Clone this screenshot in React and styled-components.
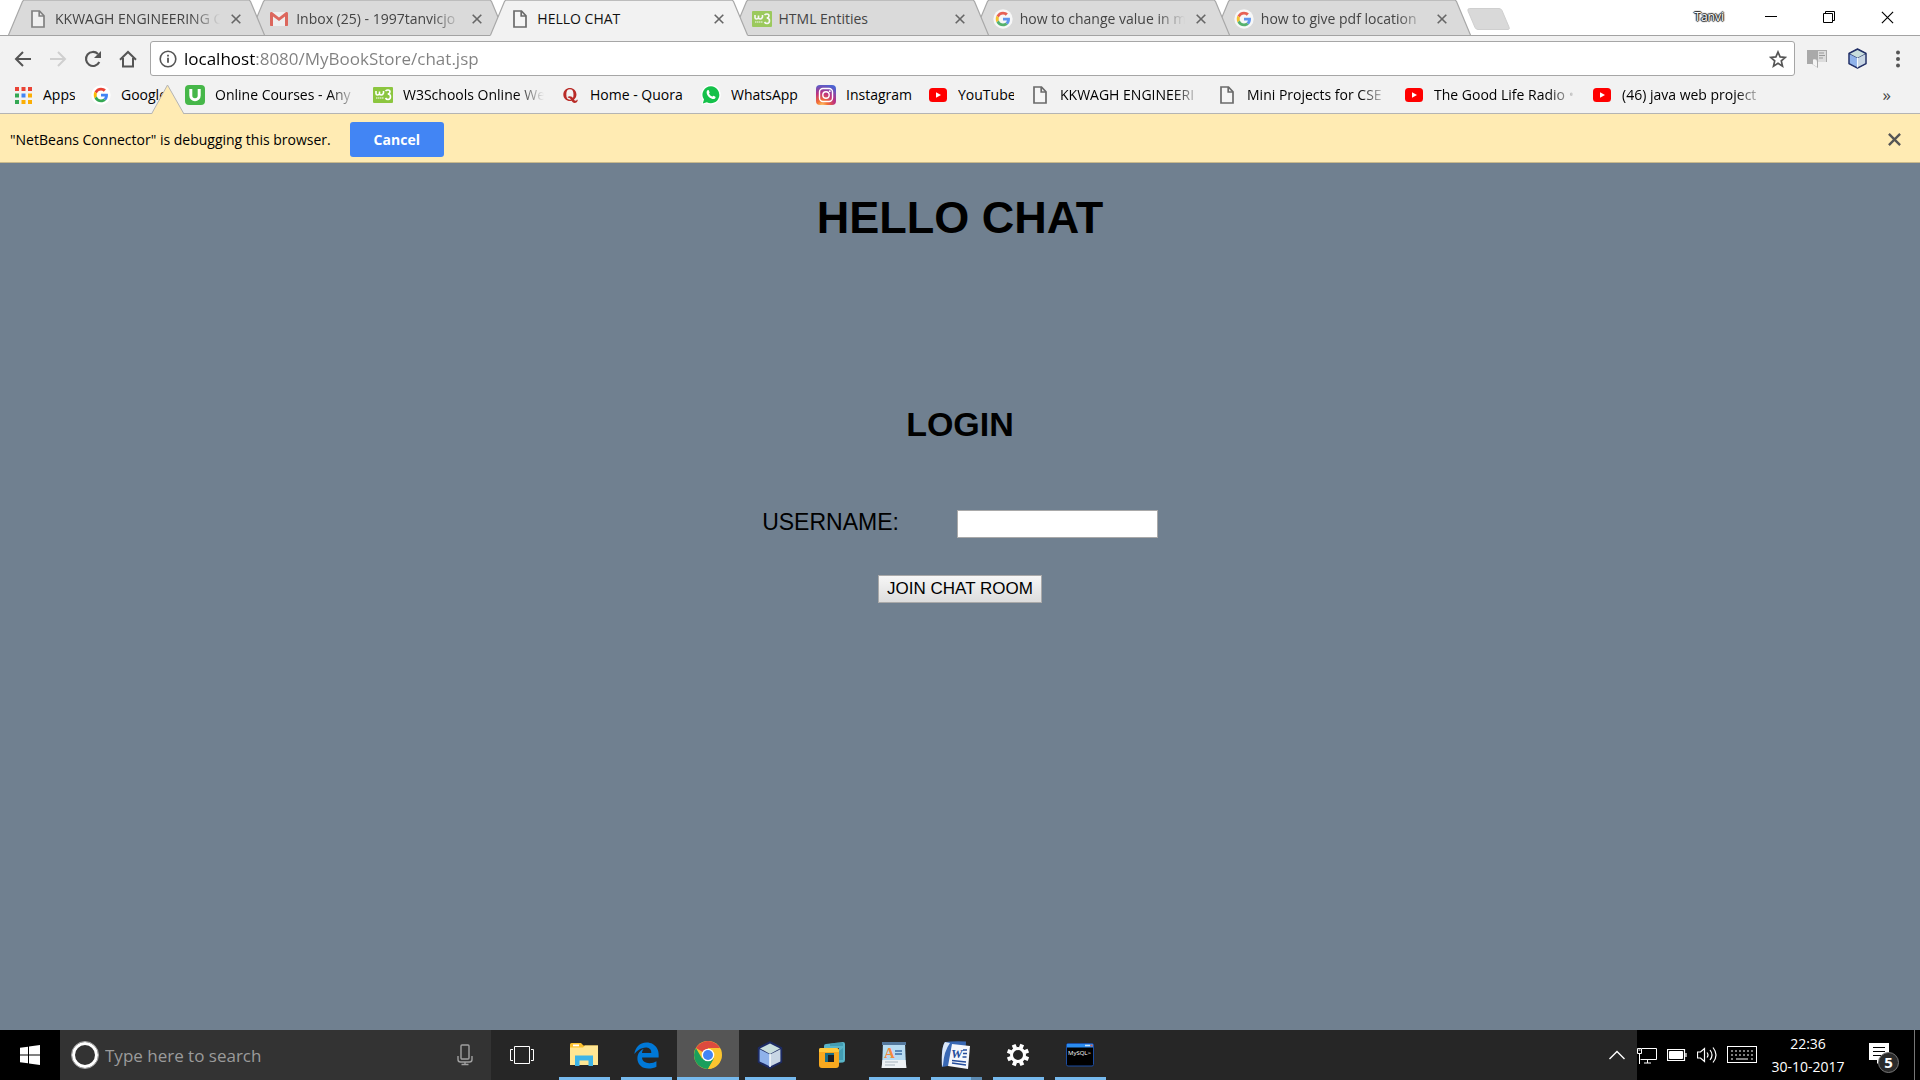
import React from "react";
import styled, { createGlobalStyle, css } from "styled-components";
import { FaQuora } from "react-icons/fa";
import { FaEdgeLegacy } from "react-icons/fa6";

const GlobalStyle = createGlobalStyle`
  *, *::before, *::after { box-sizing: border-box; }
  body { margin: 0; background: #708090; }
  button, input { font: inherit; }
  button { border: 0; padding: 0; background: none; color: inherit; cursor: pointer; }
  svg { display: block; flex: none; }
`;

const ui = `"Segoe UI", "Open Sans", "Noto Sans", sans-serif`;
const page = `"Liberation Sans", Arial, sans-serif`;

const Screen = styled.div`
  display: flex;
  flex-direction: column;
  min-height: 100vh;
  overflow: hidden;
  font-family: ${ui};
  font-size: 14px;
  color: #000;
`;

/* ---------- tab strip ---------- */
const TabStrip = styled.div`
  display: flex;
  align-items: stretch;
  height: 36px;
  padding-left: 8px;
  background: #fff;
  box-shadow: inset 0 -1px #a3a3a3;
`;
const Tabs = styled.div`
  display: flex;
  flex: 0 1 1463px;
  min-width: 0;
`;
const Tab = styled.div`
  display: flex;
  flex: 1 1 0;
  min-width: 0;
  margin-right: -16px;
  position: relative;
  z-index: ${(p) => p.$order};
  color: ${(p) => (p.$active ? "#111" : "#444")};
  &:last-child { margin-right: 0; }
`;
const TabBody = styled.div`
  display: flex;
  align-items: center;
  flex: 1;
  min-width: 0;
  padding: 1px 5px 0 4px;
  border-top: 1px solid #bdbdbd;
  border-bottom: 1px solid ${(p) => (p.$active ? "#f2f2f2" : "#a3a3a3")};
  background: ${(p) => (p.$active ? "#f2f2f2" : "#dadada")};
`;
const TabTitle = styled.button`
  display: flex;
  align-items: center;
  flex: 1;
  min-width: 0;
  gap: 7px;
  text-align: left;
`;
const Fade = styled.span`
  flex: 1;
  min-width: 0;
  overflow: hidden;
  white-space: nowrap;
  line-height: 20px;
  ${(p) => p.$fade && css`mask-image: linear-gradient(90deg, #000 calc(100% - 28px), transparent);`}
`;
const IconBox = styled.span`
  display: flex;
  align-items: center;
  justify-content: center;
  width: 20px;
  height: 20px;
  flex: none;
  opacity: ${(p) => (p.$dim ? 0.8 : 1)};
`;
const CloseButton = styled.button`
  display: flex;
  align-items: center;
  justify-content: center;
  width: 16px;
  height: 16px;
  margin-left: 8px;
  color: #666;
`;
const NewTab = styled.button`
  align-self: center;
  margin-left: -4px;
  margin-top: 2px;
`;
const WindowControls = styled.div`
  display: flex;
  align-items: center;
  margin-left: auto;
  height: 34px;
  padding-right: 4px;
`;
const UserName = styled.button`
  font-size: 12px;
  line-height: 16px;
  margin-right: 18px;
  color: #fff;
  text-shadow: 0 0 1px #222, 1px 0 1px #222, -1px 0 1px #222, 0 1px 1px #222, 0 -1px 1px #222;
`;
const WindowButton = styled.button`
  display: flex;
  align-items: center;
  justify-content: center;
  width: 58px;
  height: 34px;
`;

/* ---------- toolbar ---------- */
const Toolbar = styled.div`
  display: flex;
  align-items: center;
  height: 45px;
  padding: 0 12px 0 5px;
  background: #f2f2f2;
`;
const NavButton = styled.button`
  display: flex;
  align-items: center;
  justify-content: center;
  width: 35px;
  height: 34px;
`;
const UrlBar = styled.div`
  display: flex;
  align-items: center;
  flex: 1;
  height: 35px;
  margin-left: 5px;
  padding: 0 7px 0 8px;
  background: #fff;
  border: 1px solid #a6a6a6;
  border-radius: 3px;
`;
const UrlInput = styled.input`
  flex: 1;
  min-width: 0;
  height: 30px;
  margin-left: 7px;
  padding: 0;
  border: 0;
  outline: 0;
  font-size: 17px;
  line-height: 24px;
  color: transparent;
  caret-color: #000;
  background: linear-gradient(90deg, #000 71px, #808080 71px);
  background-clip: text;
  -webkit-background-clip: text;
`;
const Extensions = styled.div`
  display: flex;
  align-items: center;
  gap: 20px;
  margin-left: 12px;
`;

/* ---------- bookmarks ---------- */
const BookmarkBar = styled.nav`
  display: flex;
  align-items: center;
  gap: 16px;
  height: 33px;
  padding: 0 29px 4px 13px;
  background: #f2f2f2;
  border-bottom: 1px solid #b4b4b4;
`;
const Bookmark = styled.a`
  display: flex;
  align-items: center;
  gap: 10px;
  flex: none;
  width: ${(p) => p.$width}px;
  color: #000;
  text-decoration: none;
`;
const More = styled.button`
  margin-left: auto;
  font-size: 17px;
  line-height: 20px;
  color: #444;
`;

/* ---------- infobar ---------- */
const InfoBar = styled.div`
  position: relative;
  display: flex;
  align-items: center;
  height: 49px;
  padding: 2px 19px 0 10px;
  background: #ffebb3;
  border-bottom: 1px solid #c9b98c;
`;
const Pointer = styled.svg`
  position: absolute;
  left: 151px;
  bottom: 100%;
  margin-bottom: -1px;
`;
const CancelButton = styled.button`
  width: 94px;
  height: 35px;
  margin-left: 19px;
  border-radius: 3px;
  background: #4285f4;
  color: #fff;
  font-weight: 700;
`;
const InfoClose = styled.button`
  margin-left: auto;
  color: #555;
`;

/* ---------- page ---------- */
const Main = styled.main`
  flex: 1;
  display: flex;
  flex-direction: column;
  align-items: center;
  padding-top: 29px;
  background: #708090;
  font-family: ${page};
`;
const Title = styled.h1`
  margin: 0;
  font-size: 45px;
  line-height: 52px;
`;
const Subtitle = styled.h2`
  margin: 160px 0 0;
  font-size: 34px;
  line-height: 40px;
`;
const LoginForm = styled.form`
  display: flex;
  flex-direction: column;
  align-items: center;
  gap: 37px;
  margin-top: 66px;
`;
const Field = styled.div`
  display: flex;
  align-items: center;
  gap: 58px;
`;
const FieldLabel = styled.label`
  font-size: 23px;
  line-height: 24px;
  padding-bottom: 4px;
`;
const FieldInput = styled.input`
  width: 201px;
  height: 28px;
  border: 1px solid #a9a9a9;
  background: #fff;
  font-size: 17px;
`;
const JoinButton = styled.button`
  width: 164px;
  height: 28px;
  border: 1px solid #a9a9a9;
  background: linear-gradient(#f6f6f6, #dddddd);
  font-size: 17px;
  line-height: 20px;
  white-space: nowrap;
`;

/* ---------- taskbar ---------- */
const Taskbar = styled.footer`
  display: flex;
  height: 50px;
  background: #262626;
  color: #fff;
`;
const StartButton = styled.button`
  display: flex;
  align-items: center;
  justify-content: center;
  width: 60px;
  background: #000;
`;
const SearchBox = styled.label`
  display: flex;
  align-items: center;
  width: 431px;
  padding: 0 18px 0 11px;
  background: #333;
`;
const SearchInput = styled.input`
  flex: 1;
  min-width: 0;
  height: 30px;
  margin-left: 6px;
  padding: 0;
  border: 0;
  outline: 0;
  background: none;
  color: #fff;
  font-size: 17px;
  &::placeholder { color: #9b9b9b; opacity: 1; }
`;
const TaskButton = styled.button`
  display: flex;
  align-items: center;
  justify-content: center;
  width: 62px;
  border-top: 3px solid transparent;
  border-bottom: 3px solid transparent;
  background:
    ${(p) => p.$split ? "linear-gradient(#5b89b0, #5b89b0) 46px 100% / 11px 3px no-repeat border-box," : ""}
    ${(p) => p.$open ? `linear-gradient(#76b9ed, #76b9ed) 50% 100% / ${p.$active ? 62 : 51}px 3px no-repeat border-box,` : ""}
    ${(p) => (p.$active ? "#555" : "#262626")} border-box;
`;
const Tray = styled.div`
  display: flex;
  align-items: center;
  margin-left: auto;
  background: #000;
`;
const TrayToggle = styled.button`
  display: flex;
  align-items: center;
  justify-content: center;
  align-self: stretch;
  width: 40px;
  background: #262626;
`;
const TrayIcons = styled.div`
  display: flex;
  align-items: center;
  gap: 10px;
`;
const Clock = styled.time`
  display: flex;
  flex-direction: column;
  align-items: center;
  width: 102px;
  font-size: 14px;
  line-height: 23px;
`;
const Notifications = styled.button`
  width: 32px;
  height: 32px;
  margin: 6px 13px 0 10px;
`;
const ShowDesktop = styled.button`
  align-self: stretch;
  width: 6px;
  border-left: 1px solid #777;
`;

/* ---------- drawings ---------- */
const DocIcon = () => (
  <svg width="14" height="18" viewBox="0 0 14 18" fill="none" stroke="#6b6b6b" strokeWidth="1.7">
    <path d="M1 1h7.5L13 5.8V17H1z" fill="#f5f5f5" />
    <path d="M8.2 1v5H13" />
  </svg>
);
const GoogleIcon = () => (
  <svg width="20" height="20" viewBox="-9 -9 66 66">
    <circle cx="24" cy="24" r="32" fill="#fff" />
    <path fill="#EA4335" d="M24 9.5c3.54 0 6.71 1.22 9.21 3.6l6.85-6.85C35.9 2.38 30.47 0 24 0 14.62 0 6.51 5.38 2.56 13.22l7.98 6.19C12.43 13.72 17.74 9.5 24 9.5z" />
    <path fill="#4285F4" d="M46.98 24.55c0-1.57-.15-3.09-.38-4.55H24v9.02h12.94c-.58 2.96-2.26 5.48-4.78 7.18l7.73 6c4.51-4.18 7.09-10.36 7.09-17.65z" />
    <path fill="#FBBC05" d="M10.53 28.59A14.5 14.5 0 0 1 9.77 24c0-1.6.28-3.14.76-4.59l-7.98-6.19A23.9 23.9 0 0 0 0 24c0 3.88.92 7.54 2.56 10.78z" />
    <path fill="#34A853" d="M24 48c6.48 0 11.93-2.13 15.89-5.81l-7.73-6c-2.15 1.45-4.92 2.3-8.16 2.3-6.26 0-11.57-4.22-13.47-9.91l-7.98 6.19C6.51 42.62 14.62 48 24 48z" />
  </svg>
);
const GmailIcon = () => (
  <svg width="18" height="14" viewBox="0 0 18 14">
    <path d="M2 0h14v14H2z" fill="#f4f4f4" />
    <path d="M0 1.4V13c0 .6.4 1 1 1h2V4.6L9 9l6-4.400V14h2c.6 0 1-.4 1-1V1.400C18 .2 16.700-.4 15.700.3L9 5.400 2.300.3C1.300-.4 0 .2 0 1.400z" fill="#dd4b3e" />
  </svg>
);
const W3Icon = () => (
  <svg width="20" height="16" viewBox="0 0 20 16">
    <rect width="20" height="16" rx="1" fill="#8cc63f" />
    <path d="M3 4v2.500q0 1.500 1.500 1.500T6.500 6.500V4.500v2q0 1.500 1.700 1.500T10.500 6V4M12.500 4q1-1 2.500-1 2 0 2 2 0 1.500-2.200 2 2.700.2 2.700 2.700T15 12.500q-1.700 0-2.500-1.500" fill="none" stroke="#fff" strokeWidth="1.600" />
    <path d="M3 11h8" stroke="#fff" strokeWidth="1" strokeDasharray="1.500 .5" />
  </svg>
);
const AppsIcon = () => {
  const colors = ["#ea4335", "#ea4335", "#ea4335", "#34a853", "#4285f4", "#fbae05", "#34a853", "#fbae05", "#fbae05"];
  return (
    <svg width="17" height="17" viewBox="0 0 17 17">
      {colors.map((c, i) => <rect key={i} x={(i % 3) * 6.500} y={Math.floor(i / 3) * 6.500} width="4" height="4" fill={c} />)}
    </svg>
  );
};
const UdemyIcon = () => (
  <svg width="20" height="20" viewBox="0 0 20 20">
    <rect width="20" height="20" rx="4" fill="#46b749" />
    <path d="M5.800 4v6.500a4.200 4.200 0 0 0 8.400 0V4" fill="none" stroke="#fff" strokeWidth="3" />
  </svg>
);
const WhatsAppIcon = () => (
  <svg width="20" height="20" viewBox="0 0 20 20">
    <path d="M10 0a9.800 9.800 0 1 1-4.500 18.500L.5 20l1.200-5A9.800 9.800 0 0 1 10 0z" fill="#fff" />
    <path d="M10 1.300a8.500 8.500 0 1 1-4.200 16L1.800 18.500 3 14.600A8.500 8.500 0 0 1 10 1.300z" fill="#15c14a" />
    <path d="M6.300 5.500c.6-.6 1.200-.6 1.500 0l.8 1.700c.2.500-.7 1.100-.5 1.600.7 1.300 1.700 2.200 3 2.700.5.200 1-1 1.500-.8l1.800 1c.5.300-.1 1.700-.8 2.100-2 1.200-7.800-1.800-8-6.500 0-.700.3-1.400.7-1.800z" fill="#fff" />
  </svg>
);
const InstagramIcon = () => (
  <svg width="20" height="20" viewBox="0 0 20 20">
    <defs>
      <radialGradient id="insta" cx="0.3" cy="1.05" r="1.1">
        <stop offset="0" stopColor="#fed576" />
        <stop offset="0.25" stopColor="#f47133" />
        <stop offset="0.6" stopColor="#bc3081" />
        <stop offset="1" stopColor="#4c63d2" />
      </radialGradient>
    </defs>
    <rect width="20" height="20" rx="4" fill="url(#insta)" />
    <g fill="none" stroke="#fff" strokeWidth="1.400">
      <rect x="3.500" y="3.500" width="13" height="13" rx="3.500" />
      <circle cx="10" cy="10" r="3.200" />
    </g>
    <circle cx="13.800" cy="6.200" r="0.900" fill="#fff" />
  </svg>
);
const YoutubeIcon = () => (
  <svg width="18" height="14" viewBox="0 0 18 14">
    <rect width="18" height="14" rx="3.500" fill="#f00" />
    <path d="M7 4.200v5.600L12 7z" fill="#fff" />
  </svg>
);
const Cross = ({ size = 10, width = 2 }) => (
  <svg width={size} height={size} viewBox="0 0 10 10" stroke="currentColor" strokeWidth={width}>
    <path d="M.7.7l8.600 8.600M9.300.7L.7 9.300" />
  </svg>
);
const Arrow = ({ color, flip }) => (
  <svg width="18" height="18" viewBox="0 0 18 18" fill="none" stroke={color} strokeWidth="2">
    <path d={flip ? "M1 9h15M9 2l7 7-7 7" : "M17 9H2M9 2L2 9l7 7"} />
  </svg>
);
const CubeIcon = ({ size }) => (
  <svg width={size} height={size} viewBox="0 0 28 28">
    <path d="M14 1l11.500 6v14L14 27 2.500 21V7z" fill="#1d2b63" stroke="#1d2b63" strokeWidth="1.500" strokeLinejoin="round" />
    <path d="M14 2.500L24 7.500 14 13 4 7.500z" fill="#c9dedd" />
    <path d="M3.600 8.200L14 13.500v12L3.600 20.400z" fill="#8fb2ea" />
    <path d="M24.400 8.200L14 13.500v12l10.400-5.100z" fill="#c8d6e4" />
    <path d="M14 13v13" stroke="#f4f8fc" strokeWidth="1.500" />
  </svg>
);
const Edge = ({ active, right }) => {
  const fill = active ? "#f2f2f2" : "#dadada";
  return (
    <svg width="16" height="36" viewBox="0 0 16 36">
      <g transform={right ? "translate(16 0) scale(-1 1)" : undefined}>
        <path d="M0 36L15 .5H16V36z" fill={fill} />
        <path d="M.3 35.500L14.500 1.500Q15 .5 16 .5" fill="none" stroke="#a8a8a8" strokeWidth="1.200" />
        {!active && <path d="M0 35.500h16" stroke="#a3a3a3" />}
      </g>
    </svg>
  );
};

const ExplorerIcon = () => (
  <svg width="28" height="24" viewBox="0 0 28 24">
    <path d="M0 1.500Q0 0 1.500 0H11l2.500 2.500H28V22H0z" fill="#fbc02d" />
    <path d="M0 4.500h13L15 2.500h13V22H0z" fill="#ffe693" />
    <path d="M3 1.500h6v1.800H3z" fill="#fff" />
    <path d="M5 12.500h18V23h-4.500v-5.500h-9V23H5z" fill="#3db4e7" />
  </svg>
);
const ChromeIcon = () => (
  <svg width="28" height="28" viewBox="0 0 28 28">
    <circle cx="14" cy="14" r="14" fill="#fbc52f" />
    <path d="M14 14L1.900 7A14 14 0 0 1 26.100 7H14z" fill="#dd4b3e" />
    <path d="M1.900 7A14 14 0 0 0 14 28l6-10.500H8z" fill="#1a9f5c" />
    <path d="M26.100 8H14v5l6.100 4.500L14 28A14 14 0 0 0 26.100 8z" fill="#fbc52f" />
    <circle cx="14" cy="14" r="6.300" fill="#fff" />
    <circle cx="14" cy="14" r="5" fill="#4285f4" />
  </svg>
);
const VmwareIcon = () => (
  <svg width="28" height="28" viewBox="0 0 28 28">
    <path d="M8 3l17-2q2 0 2 2v16q0 2-2 2.500L9 22.500Q6 22.500 6 20V5q0-2 2-2zM12 8v9h9V7z" fill="#5ab5c8" fillRule="evenodd" />
    <path d="M12 3q6-2 13-1v3H12zM21 10v9h4V7z" fill="#348ea5" opacity=".6" />
    <path d="M7 12h9v9H7z" fill="#1c6f86" />
    <path d="M10 14h6v7h-6z" fill="#1f1f1f" />
    <path d="M3 7h15q3 0 3 3v14q0 3-3 3H4q-3 0-3-3V9q0-2 2-2zM7 12v9h9v-9z" fill="#f8a91f" fillRule="evenodd" />
    <path d="M3 7h15q3 0 3 3v1H1V9q0-2 2-2z" fill="#ffc93c" />
  </svg>
);
const WordpadIcon = () => (
  <svg width="26" height="28" viewBox="0 0 26 28">
    <path d="M2 2h22l1 25H1z" fill="#b8dcf2" />
    <path d="M1 1h24v3H1z" fill="#54789d" />
    <path d="M1.500 19h23l1 8H.5z" fill="#edf1f4" />
    <text x="3" y="17" fontFamily="Liberation Serif, serif" fontWeight="700" fontSize="15" fill="#f58a3c">A</text>
    <path d="M14 10h7M14 13h7" stroke="#3d6ea5" strokeWidth="1.500" />
    <path d="M4 21h13M4 24h10" stroke="#a7b3bd" strokeWidth="1" />
  </svg>
);
const WordIcon = () => (
  <svg width="30" height="28" viewBox="0 0 30 28">
    <path d="M4 1Q12 0 25 .5L24 22 1 26Q0 6 4 1z" fill="#3968b4" />
    <path d="M9 2Q3 10 2 24L1 26Q0 6 4 1z" fill="#dae7f8" />
    <path d="M11 3L29 5 27 28 7 25z" fill="#f5f7fb" />
    <text x="10" y="17" fontFamily="Liberation Serif, serif" fontStyle="italic" fontWeight="700" fontSize="13" fill="#254d9b">W</text>
    <path d="M22 9h4M22 12.500h4M21.500 16h4M11 19.500l14 1.500M11 22l14 2" stroke="#254d9b" strokeWidth="1.600" />
  </svg>
);
const GearIcon = () => (
  <svg width="24" height="24" viewBox="0 0 24 24" fill="none" stroke="#fff">
    <circle cx="12" cy="12" r="6.500" strokeWidth="3" />
    {[0, 45, 90, 135, 180, 225, 270, 315].map((a) => (
      <path key={a} d="M12 .8v4" strokeWidth="4" transform={`rotate(${a + 22} 12 12)`} />
    ))}
  </svg>
);
const MysqlIcon = () => (
  <svg width="28" height="24" viewBox="0 0 28 24">
    <rect x=".5" y=".5" width="27" height="22.500" rx="1.500" fill="#000" stroke="#1b4da3" />
    <path d="M1 1h26v3.500H1z" fill="#2a8cf0" />
    <path d="M19 2.500h5" stroke="#cfe2f8" strokeWidth="1.500" />
    <path d="M24.500 2.500h2" stroke="#e05a3a" strokeWidth="1.800" />
    <text x="2" y="12" fontFamily="Open Sans, sans-serif" fontSize="6" fill="#fff">MySQL&gt;</text>
  </svg>
);

const tabs = [
  { title: "KKWAGH ENGINEERING C", icon: <DocIcon />, fade: true },
  { title: "Inbox (25) - 1997tanvicjo", icon: <GmailIcon />, fade: true },
  { title: "HELLO CHAT", icon: <DocIcon />, active: true },
  { title: "HTML Entities", icon: <W3Icon /> },
  { title: "how to change value in m", icon: <GoogleIcon />, fade: true },
  { title: "how to give pdf location", icon: <GoogleIcon />, fade: true },
];

const bookmarks = [
  { title: "Apps", icon: <AppsIcon />, width: 62 },
  { title: "Google", icon: <GoogleIcon />, width: 78 },
  { title: "Online Courses - Any", icon: <UdemyIcon />, width: 172, fade: true },
  { title: "W3Schools Online We", icon: <W3Icon />, width: 171, fade: true },
  { title: "Home - Quora", icon: <FaQuora size={17} color="#b92b27" />, width: 125 },
  { title: "WhatsApp", icon: <WhatsAppIcon />, width: 99 },
  { title: "Instagram", icon: <InstagramIcon />, width: 96 },
  { title: "YouTube", icon: <YoutubeIcon />, width: 86 },
  { title: "KKWAGH ENGINEERI", icon: <DocIcon />, width: 171, fade: true },
  { title: "Mini Projects for CSE", icon: <DocIcon />, width: 171, fade: true },
  { title: "The Good Life Radio •", icon: <YoutubeIcon />, width: 172, fade: true },
  { title: "(46) java web project", icon: <YoutubeIcon />, width: 172, fade: true },
];

const tasks = [
  {
    name: "Task view",
    icon: (
      <svg width="24" height="18" viewBox="0 0 24 18" fill="none" stroke="#fff">
        <path d="M4.500.5h15v17h-15zM3 3.500H.5v11H3M21 3.500h2.500v11H21" />
      </svg>
    ),
  },
  { name: "File Explorer", icon: <ExplorerIcon />, open: true },
  { name: "Edge", icon: <FaEdgeLegacy size={27} color="#0078d7" />, open: true },
  { name: "Chrome", icon: <ChromeIcon />, open: true, active: true },
  { name: "NetBeans", icon: <CubeIcon size={28} />, open: true },
  { name: "VMware", icon: <VmwareIcon /> },
  { name: "WordPad", icon: <WordpadIcon />, open: true },
  { name: "Word", icon: <WordIcon />, open: true, split: true },
  { name: "Settings", icon: <GearIcon />, open: true },
  { name: "MySQL", icon: <MysqlIcon />, open: true },
];

export default function App() {
  return (
    <Screen>
      <GlobalStyle />
      <TabStrip>
        <Tabs>
          {tabs.map((t, i) => (
            <Tab key={t.title} $active={t.active} $order={t.active ? 10 : 9 - i}>
              <Edge active={t.active} />
              <TabBody $active={t.active}>
                <TabTitle type="button">
                  <IconBox $dim={!t.active}>{t.icon}</IconBox>
                  <Fade $fade={t.fade}>{t.title}</Fade>
                </TabTitle>
                <CloseButton type="button" aria-label="Close tab"><Cross width={1.600} /></CloseButton>
              </TabBody>
              <Edge active={t.active} right />
            </Tab>
          ))}
        </Tabs>
        <NewTab type="button" aria-label="New tab">
          <svg width="43" height="22" viewBox="0 0 43 22">
            <path d="M2.500.5H32q2 0 3 2l7 16.500q1 2.500-1 2.500H11q-2 0-3-2L1 3Q.3.5 2.500.5z" fill="#d9d9d9" stroke="#cfcfcf" />
          </svg>
        </NewTab>
        <WindowControls>
          <UserName type="button">Tanvi</UserName>
          <WindowButton type="button" aria-label="Minimize">
            <svg width="12" height="12" stroke="#000"><path d="M0 5.500h12" /></svg>
          </WindowButton>
          <WindowButton type="button" aria-label="Restore">
            <svg width="12" height="12" fill="none" stroke="#000"><path d="M.5 2.500h9v9h-9zM2.500 2.500v-2h9v9h-2" /></svg>
          </WindowButton>
          <WindowButton type="button" aria-label="Close">
            <Cross size={13} width={0.900} />
          </WindowButton>
        </WindowControls>
      </TabStrip>

      <Toolbar>
        <NavButton type="button" aria-label="Back"><Arrow color="#555" /></NavButton>
        <NavButton type="button" aria-label="Forward"><Arrow color="#cfcfcf" flip /></NavButton>
        <NavButton type="button" aria-label="Reload">
          <svg width="18" height="18" viewBox="0 0 18 18">
            <path d="M15.300 12A7 7 0 1 1 14 4" fill="none" stroke="#555" strokeWidth="2.100" />
            <path d="M17 1v7h-7z" fill="#555" />
          </svg>
        </NavButton>
        <NavButton type="button" aria-label="Home">
          <svg width="18" height="18" viewBox="0 0 18 18" fill="none" stroke="#555" strokeWidth="2">
            <path d="M1 9.800L9 2l8 7.800M4 8v8.500h10V8" />
          </svg>
        </NavButton>
        <UrlBar>
          <svg width="18" height="18" viewBox="0 0 18 18" fill="none" stroke="#555">
            <circle cx="9" cy="9" r="7.800" strokeWidth="1.600" />
            <path d="M9 7.800v5M9 4.700v1.900" strokeWidth="1.800" />
          </svg>
          <UrlInput aria-label="Address" defaultValue="localhost:8080/MyBookStore/chat.jsp" spellCheck={false} />
          <svg width="18" height="18" viewBox="0 0 18 18" fill="none" stroke="#555" strokeWidth="1.700">
            <path d="M9 2l2.100 4.900 5.200.5-4 3.500 1.200 5.200L9 13.300l-4.500 2.800 1.200-5.200-4-3.500 5.200-.5z" />
          </svg>
        </UrlBar>
        <Extensions>
          <button type="button" aria-label="Reader extension">
            <svg width="20" height="20" viewBox="0 0 20 20">
              <path d="M0 1h20v12h-9v6l-6-4H0z" fill="#a9a9a9" />
              <path d="M11 2h8v11h-8z" fill="#dcdcdc" />
              <path d="M12 4h5M12 6.500h6M12 9h4" stroke="#999" />
              <path d="M6 10.500q4-1 4 2v5.500l-4-2.500z" fill="#f4f4f4" />
            </svg>
          </button>
          <button type="button" aria-label="NetBeans extension"><CubeIcon size={21} /></button>
          <button type="button" aria-label="Menu">
            <svg width="20" height="18" viewBox="0 0 20 18" fill="#555">
              <circle cx="10" cy="2.500" r="2" /><circle cx="10" cy="9" r="2" /><circle cx="10" cy="15.500" r="2" />
            </svg>
          </button>
        </Extensions>
      </Toolbar>

      <BookmarkBar>
        {bookmarks.map((b) => (
          <Bookmark key={b.title} href="#" $width={b.width}>
            <IconBox>{b.icon}</IconBox>
            <Fade $fade={b.fade}>{b.title}</Fade>
          </Bookmark>
        ))}
        <More type="button">»</More>
      </BookmarkBar>

      <InfoBar>
        <Pointer width="34" height="31" viewBox="0 0 34 31">
          <path d="M.5 30L16.500 1 33 30V31H.5z" fill="#ffebb3" />
          <path d="M.5 30L16.500 1 33 30" fill="none" stroke="#b4b4b4" />
        </Pointer>
        <span>"NetBeans Connector" is debugging this browser.</span>
        <CancelButton type="button">Cancel</CancelButton>
        <InfoClose type="button" aria-label="Dismiss"><Cross size={13} width={1.800} /></InfoClose>
      </InfoBar>

      <Main>
        <Title>HELLO CHAT</Title>
        <Subtitle>LOGIN</Subtitle>
        <LoginForm onSubmit={(e) => e.preventDefault()}>
          <Field>
            <FieldLabel htmlFor="username">USERNAME:</FieldLabel>
            <FieldInput id="username" name="username" type="text" />
          </Field>
          <JoinButton type="submit">JOIN CHAT ROOM</JoinButton>
        </LoginForm>
      </Main>

      <Taskbar>
        <StartButton type="button" aria-label="Start">
          <svg width="20" height="20" viewBox="0 0 20 20" fill="#fff">
            <path d="M0 2.800L8 1.700V9.500H0zM9 1.500L20 0v9.500H9zM0 10.500h8v7.800L0 17.200zM9 10.500h11V20L9 18.500z" />
          </svg>
        </StartButton>
        <SearchBox>
          <svg width="28" height="28" viewBox="0 0 28 28">
            <circle cx="14" cy="14" r="11.500" fill="none" stroke="#fff" strokeWidth="3" />
            <circle cx="14" cy="14" r="13.500" fill="none" stroke="#aaa" />
          </svg>
          <SearchInput placeholder="Type here to search" aria-label="Search" />
          <svg width="16" height="22" viewBox="0 0 16 22" fill="none" stroke="#a0a0a0" strokeWidth="1.400">
            <rect x="4" y="1" width="8" height="14" rx="1" />
            <path d="M1 12v3.500q0 2.500 2.500 2.500h9q2.500 0 2.500-2.500V12M8 18v2.500M4.500 20.500h7" />
          </svg>
        </SearchBox>
        {tasks.map((t) => (
          <TaskButton key={t.name} type="button" aria-label={t.name} $open={t.open} $active={t.active} $split={t.split}>
            {t.icon}
          </TaskButton>
        ))}
        <Tray>
          <TrayToggle type="button" aria-label="Show hidden icons">
            <svg width="16" height="10" viewBox="0 0 16 10" fill="none" stroke="#fff" strokeWidth="1.400"><path d="M.5 9L8 1.500 15.500 9" /></svg>
          </TrayToggle>
          <TrayIcons>
            <svg width="20" height="17" viewBox="0 0 20 17" fill="none" stroke="#fff">
              <path d="M5 1.500h14.500v11H3.500M10.500 13v3M7 16h7M.5 1.500h4v5h-4zM2.500 7v10M1.500 3h2" />
            </svg>
            <svg width="20" height="12" viewBox="0 0 20 12" fill="none" stroke="#fff">
              <path d="M.5.500h17v11H.5zM19 4v4" strokeWidth="1.200" />
              <path d="M2.500 2.500h13v7h-13z" fill="#fff" />
            </svg>
            <svg width="20" height="18" viewBox="0 0 20 18" fill="none" stroke="#fff" strokeWidth="1.200">
              <path d="M.5 6h3L7.500 2.500v13L3.500 12h-3zM10 6.500q2 2.500 0 5M13 4q4 5 0 10M16 1.500q6 7.500 0 15" />
            </svg>
            <svg width="30" height="18" viewBox="0 0 30 18" fill="none" stroke="#fff">
              <rect x=".5" y=".5" width="29" height="16" />
              <path d="M4 5h22M4 9h22" strokeDasharray="2 2" />
              <path d="M4 13h2M9 13h12M24 13h2" />
            </svg>
          </TrayIcons>
          <Clock><span>22:36</span><span>30-10-2017</span></Clock>
          <Notifications type="button" aria-label="5 notifications">
            <svg width="32" height="32" viewBox="0 0 32 32">
              <path d="M0 1h20v17h-8l-4 4v-4H0z" fill="#fff" />
              <path d="M4 5.500h12M4 9.500h12M4 13.500h8" stroke="#000" strokeWidth="1.200" />
              <circle cx="19.500" cy="20.500" r="10" fill="#2b2b2b" stroke="#777" />
              <text x="19.500" y="26" textAnchor="middle" fontFamily="Open Sans, sans-serif" fontWeight="700" fontSize="15" fill="#fff">5</text>
            </svg>
          </Notifications>
          <ShowDesktop type="button" aria-label="Show desktop" />
        </Tray>
      </Taskbar>
    </Screen>
  );
}
